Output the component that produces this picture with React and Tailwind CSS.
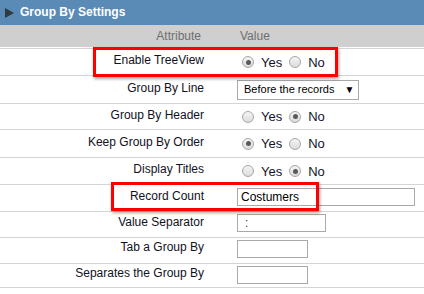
import React from "react";

function Radio({ checked }) {
  return (
    <span className="relative inline-block w-[12px] h-[12px] rounded-full border border-[#a6a6a6] bg-gradient-to-b from-[#f4f4f4] to-[#dcdcdc] shrink-0">
      {checked && (
        <span className="absolute left-[2.5px] top-[2.5px] w-[5px] h-[5px] rounded-full bg-[#5a5a5a]" />
      )}
    </span>
  );
}

function YesNo({ yes }) {
  return (
    <div className="flex items-center pl-[5px]">
      <Radio checked={yes} />
      <span className="ml-[7px] text-[#14142a] text-[13px]">Yes</span>
      <span className="ml-[7px] flex"><Radio checked={!yes} /></span>
      <span className="ml-[7px] text-[#14142a] text-[13px]">No</span>
    </div>
  );
}

function Row({ h, label, children, labelPt = "pt-[3px]", valueClass = "items-center" }) {
  return (
    <div className={`flex border-b border-[#d4d4d4] ${h}`}>
      <div className={`w-[212px] shrink-0 text-right pr-[8px] text-[#111122] ${labelPt}`}>{label}</div>
      <div className={`flex flex-1 pl-[25px] ${valueClass}`}>{children}</div>
    </div>
  );
}

function TextBox({ w, value, color = "text-black" }) {
  return (
    <div className={`h-[18px] border border-[#a9a9a9] bg-white flex items-center pl-[3px] ${w} ${color}`}>
      {value}
    </div>
  );
}

export default function App() {
  return (
    <div
      className="relative w-[424px] h-[294px] bg-white overflow-hidden text-[12px] leading-[15px]"
      style={{ fontFamily: '"Liberation Sans", Arial, sans-serif' }}
    >
      <div className="h-[25px] bg-[#5a8bb6] flex items-center pl-[5px]">
        <svg width="9" height="10" viewBox="0 0 9 10">
          <polygon points="0,0 9,5 0,10" fill="#2f3a44" />
        </svg>
        <span className="ml-[6px] text-white font-bold text-[12px]">Group By Settings</span>
      </div>
      <div className="h-[22px] bg-[#cfcfcf] flex items-center">
        <div className="w-[212px] text-right pr-[11px] text-[#6e6e6e]">Attribute</div>
        <div className="pl-[28px] text-[#6e6e6e]">Value</div>
      </div>
      <div className="h-[1px] bg-white" />
      <div className="h-[1px] bg-[#d4d4d4]" />

      <Row h="h-[27px]" label="Enable TreeView" labelPt="pt-[4px]">
        <YesNo yes={true} />
      </Row>
      <Row h="h-[28px]" label="Group By Line" labelPt="pt-[5px]">
        <div className="w-[122px] h-[20px] border border-[#a9a9a9] bg-white flex items-center pl-[6px] text-black whitespace-nowrap">
          <span className="text-[11px]">Before the records</span>
          <span className="text-[10px] ml-[10px]">▼</span>
        </div>
      </Row>
      <Row h="h-[26px]" label="Group By Header" labelPt="pt-[4px]">
        <YesNo yes={false} />
      </Row>
      <Row h="h-[28px]" label="Keep Group By Order" labelPt="pt-[5px]">
        <YesNo yes={true} />
      </Row>
      <Row h="h-[27px]" label="Display Titles" labelPt="pt-[4px]">
        <YesNo yes={false} />
      </Row>
      <Row h="h-[27px]" label="Record Count" labelPt="pt-[4px]" valueClass="items-start pt-[3px]">
        <TextBox w="w-[178px]" value="Costumers" />
      </Row>
      <Row h="h-[26px]" label="Value Separator" labelPt="pt-[3px]" valueClass="items-start pt-[2px]">
        <TextBox w="w-[89px]" value={<span className="pl-[4px] text-[#7a007a]">:</span>} />
      </Row>
      <Row h="h-[26px]" label="Tab a Group By" labelPt="pt-[2px]" valueClass="items-start pt-[2px]">
        <TextBox w="w-[71px]" value="" />
      </Row>
      <Row h="h-[24px]" label="Separates the Group By" labelPt="pt-[2px]" valueClass="items-start pt-[2px]">
        <TextBox w="w-[71px]" value="" />
      </Row>

      <div className="absolute left-[93px] top-[47px] w-[245px] h-[30px] border-[3px] border-[#ff0000] shadow-[1px_2px_3px_rgba(0,0,0,0.35)]" />
      <div className="absolute left-[111px] top-[182px] w-[208px] h-[29px] border-[3px] border-[#ff0000] shadow-[1px_2px_3px_rgba(0,0,0,0.35)]" />
    </div>
  );
}
